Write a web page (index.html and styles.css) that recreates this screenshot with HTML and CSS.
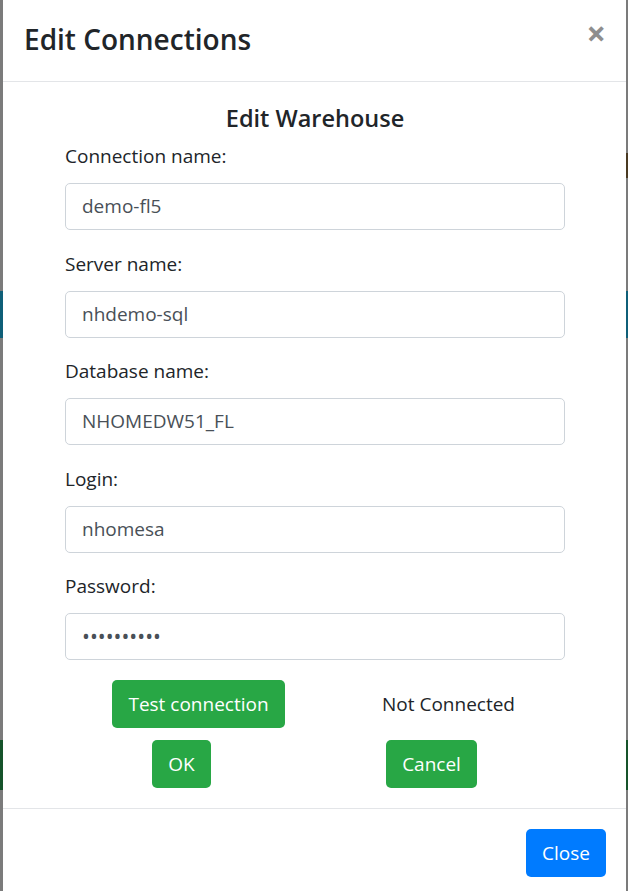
FILE: index.html
```html
<!DOCTYPE html>
<html>
<head>
<meta charset="utf-8">
<link rel="stylesheet" href="styles.css">
</head>
<body>
<div class="screen">
  <div class="edge edge-left">
    <div class="seg seg-gap1"></div>
    <div class="seg seg-teal"></div>
    <div class="seg seg-gap2"></div>
    <div class="seg seg-green"></div>
  </div>
  <div class="modal">
    <div class="modal-header">
      <h4 class="modal-title">Edit Connections</h4>
      <span class="close">×</span>
    </div>
    <div class="modal-body">
      <h5 class="section-title">Edit Warehouse</h5>
      <div class="field">
        <label>Connection name:</label>
        <div class="input">demo-fl5</div>
      </div>
      <div class="field">
        <label>Server name:</label>
        <div class="input">nhdemo-sql</div>
      </div>
      <div class="field">
        <label>Database name:</label>
        <div class="input">NHOMEDW51_FL</div>
      </div>
      <div class="field">
        <label>Login:</label>
        <div class="input">nhomesa</div>
      </div>
      <div class="field">
        <label>Password:</label>
        <div class="input password">••••••••••</div>
      </div>
      <div class="row row-test">
        <span class="btn btn-green">Test connection</span>
        <span class="status">Not Connected</span>
      </div>
      <div class="row row-ok">
        <span class="btn btn-green">OK</span>
        <span class="btn btn-green">Cancel</span>
      </div>
    </div>
    <div class="modal-footer">
      <span class="btn btn-blue">Close</span>
    </div>
  </div>
  <div class="edge edge-right">
    <div class="seg seg-gap0"></div>
    <div class="seg seg-brown"></div>
    <div class="seg seg-gap1b"></div>
    <div class="seg seg-teal"></div>
    <div class="seg seg-gap2"></div>
    <div class="seg seg-green"></div>
  </div>
</div>
</body>
</html>
```

FILE: styles.css
```css
html, body {
  margin: 0;
  padding: 0;
  background: #ffffff;
}
body {
  font-family: "Open Sans", "Noto Sans", sans-serif;
  color: #212529;
  width: 628px;
  height: 891px;
  overflow: hidden;
}
.screen {
  display: flex;
  height: 891px;
}
.edge {
  background: #7b7b7b;
  display: flex;
  flex-direction: column;
}
.edge-left { width: 3px; }
.edge-right { width: 2px; }
.seg { width: 100%; }
.seg-gap0 { height: 153px; }
.seg-brown { height: 25px; background: #4a3a22; }
.seg-gap1b { height: 113px; }
.seg-gap1 { height: 291px; }
.seg-teal { height: 47px; background: #0f5f78; }
.seg-gap2 { height: 402px; }
.seg-green { height: 50px; background: #16532a; }

.modal {
  flex: 1;
  background: #fff;
  display: flex;
  flex-direction: column;
}
.modal-header {
  height: 81px;
  border-bottom: 1px solid #e3e5e8;
  display: flex;
  align-items: flex-start;
  justify-content: space-between;
  padding: 0 20px 0 21px;
  box-sizing: content-box;
}
.modal-title {
  margin: 20px 0 0;
  font-size: 28px;
  font-weight: 600;
  line-height: 38px;
  color: #212529;
}
.close {
  margin-top: 11px;
  font-size: 34px;
  font-weight: 700;
  color: #8e8e8e;
  line-height: 44px;
}
.modal-body {
  padding: 0 61px 20px 62px;
}
.section-title {
  margin: 20px 0 0;
  text-align: center;
  font-size: 23.5px;
  font-weight: 600;
  line-height: 32px;
  color: #212529;
}
.field {
  display: flex;
  flex-direction: column;
}
.field label {
  font-size: 19px;
  line-height: 30px;
  margin-top: 7px;
  height: 30px;
}
.input {
  margin-top: 12px;
  height: 45px;
  border: 1px solid #ced4da;
  border-radius: 5px;
  padding: 0 16px;
  font-size: 19px;
  line-height: 45px;
  color: #495057;
  margin-bottom: 11.5px;
}
.password {
  font-size: 21px;
  color: #495057;
}
.row {
  display: grid;
  align-items: center;
}
.row-test {
  grid-template-columns: 267px 233px;
  margin-top: 8.5px;
}
.row-ok {
  grid-template-columns: 233px 267px;
  margin-top: 12px;
}
.row .btn, .row .status { justify-self: center; }
.status {
  font-size: 19px;
  color: #212529;
}
.btn {
  display: inline-block;
  height: 48px;
  line-height: 48px;
  padding: 0 16px;
  border-radius: 5px;
  font-size: 19px;
  color: #fff;
}
.btn-green { background: #28a745; }
.btn-blue { background: #007bff; }
.modal-footer {
  border-top: 1px solid #e3e5e8;
  display: flex;
  justify-content: flex-end;
  padding: 20px 20px 0 0;
}
```
